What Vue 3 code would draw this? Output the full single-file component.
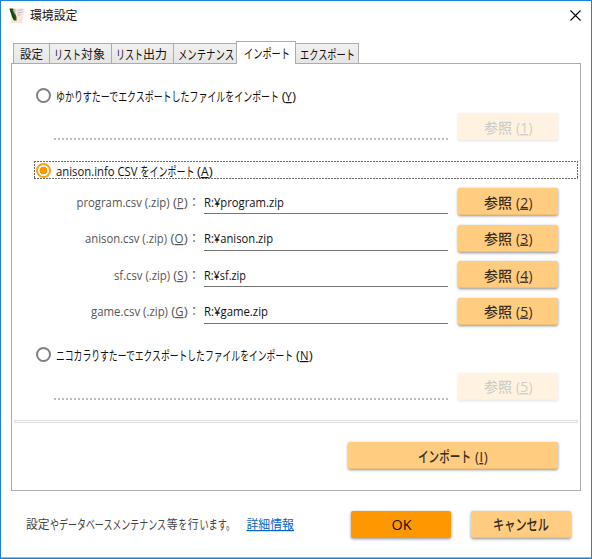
<script setup>
import { h } from 'vue'

// One line of text made of runs: [text, left, width, underlined].
// Kana runs are condensed to the given width, as in a narrow UI typeface.
const isKana = (text) => /^[\u3040-\u30ff。]+$/.test(text)
const Line = (props) =>
  h(
    'svg',
    { width: props.w, height: props.ht, class: 'line' },
    props.runs.map(([text, x, width, underlined]) =>
      h(
        'text',
        {
          x,
          y: props.base,
          textLength: width,
          lengthAdjust: 'spacingAndGlyphs',
          'font-size': isKana(text) ? '1.08em' : undefined,
          'text-decoration': underlined ? 'underline' : undefined,
        },
        text,
      ),
    ),
  )
Line.props = ['w', 'ht', 'base', 'runs']

const tabs = [
  { w: 37, runs: [['設定', 6, 23]] },
  { w: 63, runs: [['リスト', 4, 27], ['対象', 31, 24]] },
  { w: 63, runs: [['リスト', 4, 27], ['出力', 31, 24]] },
  { w: 64, runs: [['メンテナンス', 4, 56]] },
  { w: 60, active: true, runs: [['インポート', 7, 46]] },
  { w: 64, runs: [['エクスポート', 4, 55]] },
]

const files = [
  {
    base: 19, mt: 9, value: 'R:¥program.zip', vw: 80, n: '2',
    label: [['program.csv (.zip)', 64.5, 93], ['(', 161, 4], ['P', 165, 6.5, true], [')', 171.7, 4]],
  },
  {
    base: 18, mt: 10, value: 'R:¥anison.zip', vw: 69, n: '3',
    label: [['anison.csv (.zip)', 73, 82], ['(', 158.5, 4], ['O', 162.5, 9, true], [')', 171.7, 4]],
  },
  {
    base: 19, mt: 9, value: 'R:¥sf.zip', vw: 42, n: '4',
    label: [['sf.csv (.zip)', 102, 56], ['(', 161.3, 4], ['S', 165.2, 6.3, true], [')', 171.7, 4]],
  },
  {
    base: 18, mt: 10, value: 'R:¥game.zip', vw: 64, n: '5',
    label: [['game.csv (.zip)', 79, 77], ['(', 159.2, 4], ['G', 163.2, 8.3, true], [')', 171.7, 4]],
  },
]

const browse = (n) => [['参照', 26, 28], ['(', 58, 4], [n, 62.2, 8, true], [')', 70.5, 4]]
</script>

<template>
  <div class="window">
    <header class="titlebar">
      <svg class="logo" width="17" height="17" viewBox="0 0 17 17">
        <path d="M1.500 .5H16L13 15H2Z" fill="#fde6d8" />
        <path d="M8.500 2.500l5-1M8.500 5l5-1M8.500 7.500l3-1" stroke="#b9bedb" stroke-width="1" fill="none" />
        <path d="M.5 .5H4.200L7.500 9V12.500L5 12.500L3 9Z" fill="#215a20" />
        <path d="M4 2.500L6.500 .5V7Z" fill="#b9c2a8" />
        <path d="M1.200 1l4.300 10.500" stroke="#163f17" stroke-width="1.300" />
      </svg>
      <Line class="title" :w="60" :ht="20" :base="14" :runs="[['環境設定', 0, 47.5]]" />
      <svg class="close" width="11" height="11" viewBox="0 0 11 11">
        <path d="M.5 .5l10 10M10.5 .5l-10 10" stroke="#000" stroke-width="1.1" />
      </svg>
    </header>

    <nav class="tabs">
      <div v-for="(t, i) in tabs" :key="i" class="tab" :class="{ active: t.active }" :style="{ width: t.w + 'px' }">
        <Line :w="t.w - 2" :ht="20" :base="t.active ? 15.5 : 14.5" :runs="t.runs" />
      </div>
    </nav>

    <main class="panel">
      <div class="option first">
        <span class="radio"></span>
        <Line
          :w="260" :ht="18" :base="15"
          :runs="[['ゆかりすたーでエクスポートしたファイルをインポート', 0, 223], ['(', 225.7, 4], ['Y', 229.3, 6.5, true], [')', 236, 4]]"
        />
      </div>
      <div class="row after-option">
        <div class="blank"></div>
        <div class="btn disabled"><Line :w="100" :ht="27" :base="20" :runs="browse('1')" /></div>
      </div>

      <div class="option focused">
        <span class="radio on"></span>
        <Line
          :w="260" :ht="18" :base="15"
          :runs="[['anison.info CSV', 0, 81.5], ['をインポート', 84.5, 54], ['(', 141, 4], ['A', 145, 7.6, true], [')', 152.7, 4]]"
        />
      </div>
      <div v-for="f in files" :key="f.n" class="row" :style="{ marginTop: f.mt + 'px' }">
        <Line class="label" :w="192" :ht="27" :base="f.base" :runs="[...f.label, ['：', 176, 12]]" />
        <div class="field"><Line :w="200" :ht="25" :base="f.base" :runs="[[f.value, 0, f.vw]]" /></div>
        <div class="btn"><Line :w="100" :ht="27" :base="f.base + 0.5" :runs="browse(f.n)" /></div>
      </div>

      <div class="option last">
        <span class="radio"></span>
        <Line
          :w="280" :ht="18" :base="15"
          :runs="[['ニコカラりすたーでエクスポートしたファイルをインポート', 0, 237], ['(', 240, 4], ['N', 244, 8.5, true], [')', 252.7, 4]]"
        />
      </div>
      <div class="row last-row">
        <div class="blank"></div>
        <div class="btn disabled"><Line :w="100" :ht="27" :base="19" :runs="browse('5')" /></div>
      </div>

      <div class="separator"></div>
      <div class="btn import">
        <Line :w="210" :ht="27" :base="20" :runs="[['インポート', 70, 53], ['(', 127, 4], ['I', 131.3, 4, true], [')', 135.7, 4]]" />
      </div>
    </main>

    <footer class="footer">
      <Line
        class="note" :w="220" :ht="27" :base="18"
        :runs="[['設定', 0, 23.5], ['やデータベースメンテナンス', 24, 116], ['等', 140.8, 11], ['を', 152.5, 8.5], ['行', 161.8, 11], ['います。', 173.5, 35.5]]"
      />
      <Line class="link" :w="48" :ht="27" :base="18" :runs="[['詳細情報', 0.5, 47.5, true]]" />
      <div class="btn ok"><Line :w="100" :ht="27" :base="19" :runs="[['OK', 40.5, 20]]" /></div>
      <div class="btn cancel"><Line :w="100" :ht="27" :base="19" :runs="[['キャンセル', 22, 56]]" /></div>
    </footer>
  </div>
</template>

<style>
body {
  margin: 0;
  background: #fff;
}
</style>

<style scoped>
.window {
  box-sizing: border-box;
  width: 592px;
  height: 559px;
  border: 1px solid #1883d7;
  background: #fff;
  box-shadow: inset 0 -1px #a9b4bd;
  font-family: 'Open Sans', 'Noto Sans', 'Noto Sans CJK JP', sans-serif;
  font-size: 12px;
  overflow: hidden;
}
.line {
  display: block;
  flex: none;
  overflow: visible;
  fill: #111;
}
.titlebar {
  display: flex;
  align-items: flex-start;
  height: 40px;
}
.logo {
  margin: 7px 0 0 8px;
}
.title {
  margin: 5px 0 0 4px;
}
.close {
  margin: 9px 10px 0 auto;
}
.tabs {
  display: flex;
  align-items: flex-end;
  height: 23px;
  padding-left: 12px;
  position: relative;
  z-index: 1;
}
.tab {
  box-sizing: border-box;
  flex: none;
  height: 21px;
  margin-right: -1px;
  border: 1px solid #acacac;
  background: linear-gradient(#f0f0f0, #e5e5e5);
}
.tab.active {
  height: 23px;
  border-bottom: 0;
  background: #fff;
  position: relative;
  z-index: 1;
}
.panel {
  box-sizing: border-box;
  width: 570px;
  height: 428px;
  margin: -1px 0 0 10px;
  border: 1px solid #acacac;
  display: flex;
  flex-direction: column;
}
.option {
  box-sizing: border-box;
  height: 18px;
  margin: 0 2px 0 22px;
  display: flex;
  align-items: center;
  gap: 5px;
  padding-left: 2px;
}
.first {
  margin-top: 22px;
}
.focused {
  margin-top: 21px;
  background:
    repeating-linear-gradient(90deg, #6b6b6b 0 2px, transparent 2px 3px) top / 100% 1px no-repeat,
    repeating-linear-gradient(90deg, #6b6b6b 0 2px, transparent 2px 3px) bottom / 100% 1px no-repeat,
    repeating-linear-gradient(#6b6b6b 0 2px, transparent 2px 3px) left / 1px 100% no-repeat,
    repeating-linear-gradient(#6b6b6b 0 2px, transparent 2px 3px) right / 1px 100% no-repeat;
}
.last {
  margin-top: 20px;
}
.radio {
  box-sizing: border-box;
  width: 15px;
  height: 15px;
  border: 2px solid #808080;
  border-radius: 50%;
}
.radio.on {
  border-color: #ff9f10;
  background: radial-gradient(circle, #ff9800 0 3.6px, transparent 4.2px);
}
.row {
  display: flex;
  height: 27px;
}
.after-option {
  margin-top: 9px;
}
.last-row {
  margin-top: 10px;
}
.label {
  fill: #555;
}
.field {
  box-sizing: border-box;
  width: 244px;
  height: 26px;
  border-bottom: 1px solid #757575;
}
.blank {
  width: 394px;
  height: 27px;
  margin-left: 42px;
  background: repeating-linear-gradient(90deg, #bcbcbc 0 2px, transparent 2px 4px) bottom / 100% 2px no-repeat;
}
.btn {
  flex: none;
  width: 100px;
  height: 27px;
  margin-left: 10px;
  border-radius: 2px;
  background: #ffcc80;
  box-shadow: 0 1px 3px rgba(0, 0, 0, 0.45), inset 0 -1px #f0c078;
  font-size: 14px;
  font-weight: 500;
}
.btn .line {
  fill: #372d20;
}
.disabled {
  opacity: 0.24;
}
.separator {
  box-sizing: border-box;
  height: 3px;
  margin: 20px 2px 0;
  border: 1px solid #dedede;
}
.import {
  width: 210px;
  margin: 19px 0 0 336px;
}
.footer {
  display: flex;
  margin-top: 20px;
  padding-left: 25px;
}
.note {
  fill: #444;
}
.link {
  fill: #0066cc;
}
.ok {
  margin-left: 57px;
  background: #ff9800;
  box-shadow: 0 1px 3px rgba(0, 0, 0, 0.45);
}
.ok .line {
  fill: #111;
}
.cancel {
  margin-left: 20px;
}
</style>
